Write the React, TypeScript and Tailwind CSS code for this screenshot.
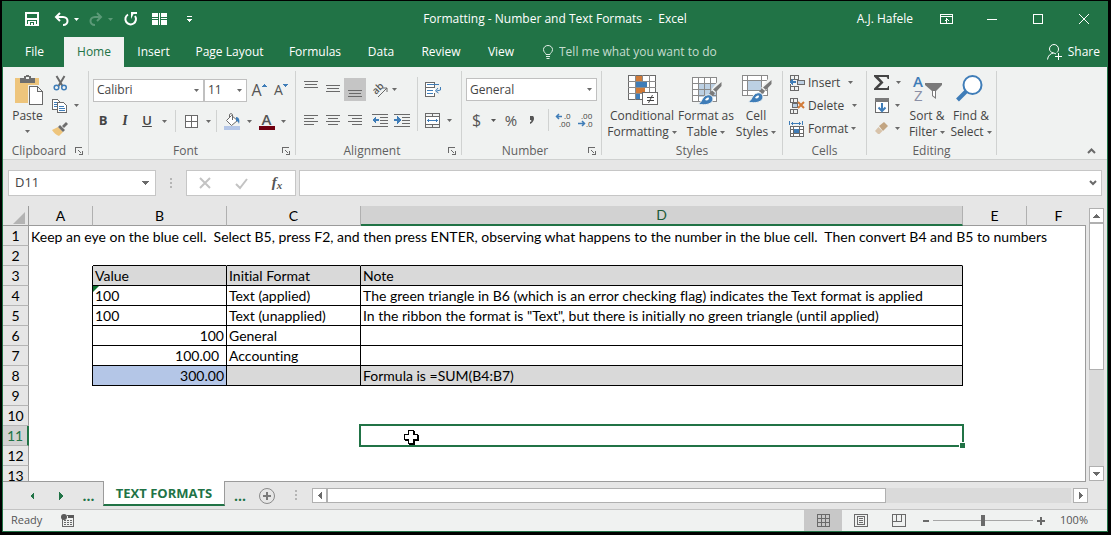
import type { ReactNode } from "react"
import clsx from "clsx"

interface SheetRow {
  value?: string
  format?: string
  note?: string
}

const rows: Record<number, SheetRow> = {
  3: { value: "Value", format: "Initial Format", note: "Note" },
  4: {
    value: "100",
    format: "Text (applied)",
    note: "The green triangle in B6 (which is an error checking flag) indicates the Text format is applied",
  },
  5: {
    value: "100",
    format: "Text (unapplied)",
    note: 'In the ribbon the format is "Text", but there is initially no green triangle (until applied)',
  },
  6: { value: "100", format: "General" },
  7: { value: "100.00", format: "Accounting" },
  8: { value: "300.00", note: "Formula is =SUM(B4:B7)" },
}

const tabs = [
  { name: "File", width: "w-[59px]" },
  { name: "Home", width: "w-[60px]" },
  { name: "Insert", width: "w-[59px]" },
  { name: "Page Layout", width: "w-[93px]" },
  { name: "Formulas", width: "w-[78px]" },
  { name: "Data", width: "w-[54px]" },
  { name: "Review", width: "w-[66px]" },
  { name: "View", width: "w-[54px]" },
]

function Caret({ className }: { className?: string }) {
  return (
    <svg className={clsx("shrink-0", className)} width="5" height="3" viewBox="0 0 5 3" fill="currentColor">
      <path d="M0 0h5L2.5 3z" />
    </svg>
  )
}

function Icon({ w = 16, h = 16, soft, children }: { w?: number; h?: number; soft?: boolean; children: ReactNode }) {
  return (
    <svg
      className="shrink-0 overflow-visible"
      width={w}
      height={h}
      viewBox={`0 0 ${w} ${h}`}
      fill="none"
      stroke="#6a6a6a"
      shapeRendering={soft ? "auto" : "crispEdges"}
    >
      {children}
    </svg>
  )
}

function IconButton({ label, className, children }: { label: string; className?: string; children: ReactNode }) {
  return (
    <button type="button" aria-label={label} className={clsx("flex shrink-0 items-center justify-center", className)}>
      {children}
    </button>
  )
}

function Group({ title, width, launcher, children }: { title: string; width: string; launcher?: boolean; children: ReactNode }) {
  return (
    <>
      <section className={clsx("flex shrink-0 flex-col pt-1", width)}>
        <div className="flex flex-1">{children}</div>
        <div className="flex h-4 items-center text-[#5f5f5f]">
          <span className="flex-1 text-center">{title}</span>
          {launcher && (
            <span className="flex w-[13px]">
              <IconButton label={`${title} settings`}>
                <Icon w={8} h={8}>
                  <path d="M.5 6V.5H7M3 3l3 3M3.500 7.500h4v-4" />
                </Icon>
              </IconButton>
            </span>
          )}
        </div>
      </section>
      <div className="my-1 w-px shrink-0 bg-[#d0d2d1]" />
    </>
  )
}

function Dropdown({ label, value, className }: { label: string; value: string; className: string }) {
  return (
    <label className={clsx("relative block h-[23px]", className)}>
      <select
        aria-label={label}
        defaultValue={value}
        className="h-full w-full appearance-none border border-[#c0c0c0] bg-white pl-[3px] text-[#444]"
      >
        <option>{value}</option>
      </select>
      <Caret className="pointer-events-none absolute top-[10px] right-[5px]" />
    </label>
  )
}

function BigButton({ icon, lines, width }: { icon: ReactNode; lines: [string, string]; width: string }) {
  return (
    <button type="button" className={clsx("flex shrink-0 flex-col items-center pt-1 leading-4 whitespace-nowrap text-[#444]", width)}>
      <span className="mb-[3px] flex h-[30px]">{icon}</span>
      <span>{lines[0]}</span>
      <span className="flex items-center gap-[3px]">
        {lines[1]}
        <Caret className="text-[#6a6a6a]" />
      </span>
    </button>
  )
}

function CellsButton({ icon, text, width }: { icon: ReactNode; text: string; width: string }) {
  return (
    <button type="button" className="flex h-[23px] items-center text-[#444]">
      <span className={clsx("flex items-center gap-[3px]", width)}>
        {icon}
        {text}
      </span>
      <Caret className="text-[#6a6a6a]" />
    </button>
  )
}

function Brush() {
  return (
    <g stroke="none" shapeRendering="auto">
      <path d="M29 6v5l-6 7-4-3 7-9z" fill="#f0f2f1" />
      <path d="M29.500 7v4l-5.500 6-3-2.500zM20 15.500l3 2.500-2 3-4-2.500z" fill="#7a7a7a" />
      <path d="M6 29c4-1 4-8 9-9 3-1 6 1 6 4 0 5-8 7-15 5z" fill="#3f7db8" stroke="#f0f2f1" />
      <path d="M13 25c1-2 3-3 4-2 0 2-2 3-4 2z" fill="#fff" />
    </g>
  )
}

function Lines({ y }: { y: number }) {
  return (
    <Icon w={14} h={23}>
      <path d={`M0 ${y}h14M1 ${y + 3}h12M0 ${y + 6}h14`} />
    </Icon>
  )
}

function TextLines({ indent }: { indent: number }) {
  return (
    <Icon w={14} h={22}>
      <path d={`M0 6.500h14M${indent} 9.500h10M0 12.500h14M${indent} 15.500h10`} />
    </Icon>
  )
}

function TitleBar() {
  return (
    <header className="grid h-9 shrink-0 grid-cols-[1fr_auto_1fr] items-center bg-[#217346] text-white">
      <div className="flex h-full items-center pl-3">
        <IconButton label="Save" className="w-[34px]">
          <Icon w={14} h={14}>
            <path d="M1 1h12v12H1z" stroke="#fff" strokeWidth="2" />
            <path d="M2 6h10v2H2zM3 9h8v4H3z" fill="#fff" stroke="none" />
            <path d="M5 10h4v3H5z" fill="#217346" stroke="none" />
            <path d="M6 11h2v2H6z" fill="#fff" stroke="none" />
          </Icon>
        </IconButton>
        <IconButton label="Undo" className="w-[35px] gap-[5px]">
          <Icon w={15} h={14} soft>
            <path d="M6 1L2 5l4 4M2 5h7c6 0 6 8 0 8" stroke="#fff" strokeWidth="2" />
          </Icon>
          <Caret />
        </IconButton>
        <IconButton label="Redo" className="w-[34px] gap-[5px] text-[#5c9a78]">
          <Icon w={14} h={14} soft>
            <path d="M8 1l4 4-4 4M12 5H6C0 5 0 13 6 13" stroke="#5c9a78" strokeWidth="2" />
          </Icon>
          <Caret />
        </IconButton>
        <IconButton label="Repeat" className="w-[26px]">
          <Icon w={14} h={14} soft>
            <path d="M4 2.500A5.300 5.300 0 1 0 11 4" stroke="#fff" strokeWidth="2" />
            <path d="M7 0h6v2H9.500L7 7z" fill="#fff" stroke="none" />
          </Icon>
        </IconButton>
        <IconButton label="Freeze panes" className="w-[31px]">
          <Icon w={15} h={12}>
            <path d="M0 0h6v4H0zM9 0h6v4H9zM0 5h6v1H0zM9 5h6v1H9zM0 7h6v5H0zM9 7h6v5H9zM7 0h1v12H7z" fill="#fff" stroke="none" />
          </Icon>
        </IconButton>
        <IconButton label="Customize toolbar" className="w-7">
          <Icon w={5} h={6}>
            <path d="M0 .5h5" stroke="#fff" />
            <path d="M0 3h5L2.500 6z" fill="#fff" stroke="none" />
          </Icon>
        </IconButton>
      </div>
      <h1 className="whitespace-pre">Formatting - Number and Text Formats  -  Excel</h1>
      <div className="flex h-full items-center justify-end">
        <span className="mr-[10px]">A.J. Hafele</span>
        <IconButton label="Ribbon display options" className="h-full w-[46px]">
          <Icon w={13} h={10}>
            <path d="M.5.5h12v9H.5zM0 2.500h13M6.500 4v5M4.500 6.500h1M7.500 6.500h1M5.500 5.500h2" stroke="#fff" />
          </Icon>
        </IconButton>
        <IconButton label="Minimize" className="h-full w-[46px]">
          <Icon w={10} h={10}>
            <path d="M0 5.500h10" stroke="#fff" />
          </Icon>
        </IconButton>
        <IconButton label="Maximize" className="h-full w-[46px]">
          <Icon w={10} h={10}>
            <path d="M.5.5h9v9h-9z" stroke="#fff" />
          </Icon>
        </IconButton>
        <IconButton label="Close" className="h-full w-[46px]">
          <Icon w={10} h={10} soft>
            <path d="M0 0l10 10M10 0L0 10" stroke="#fff" />
          </Icon>
        </IconButton>
      </div>
    </header>
  )
}

function TabBar() {
  return (
    <nav className="flex h-[30px] shrink-0 bg-[#217346] pr-[7px] text-white">
      <span className="w-0.5" />
      {tabs.map((tab) => (
        <button
          key={tab.name}
          type="button"
          className={clsx("shrink-0 whitespace-nowrap", tab.width, tab.name === "Home" && "bg-[#f0f2f1] text-[#217346]")}
        >
          {tab.name}
        </button>
      ))}
      <label className="flex flex-1 items-center gap-[6px] pl-[15px]">
        <Icon w={10} h={14} soft>
          <path d="M3 9.500C3 8 .5 7.500.5 4.500a4.500 4 0 0 1 9 0C9.500 7.500 7 8 7 9.500zM3 11.500h4M3.500 13.500h3" stroke="#e3efe8" />
        </Icon>
        <input
          aria-label="Tell me what you want to do"
          placeholder="Tell me what you want to do"
          className="w-full bg-transparent outline-none placeholder:text-[#c5dccf]"
        />
      </label>
      <button type="button" className="flex items-center gap-[6px]">
        <Icon w={15} h={16} soft>
          <path d="M6.500 9C4 8.500 2.500 7 2.500 5a4.500 4.500 0 0 1 9 0c0 1.500-.5 2.500-1.500 3.500M6.500 9C3.500 9.500 1 11.500.5 15.500M6.500 9c1 .2 2 .6 2.500 1M11.500 9v7M8 12.500h7" stroke="#fff" />
        </Icon>
        Share
      </button>
    </nav>
  )
}

function ClipboardGroup() {
  return (
    <Group title="Clipboard" width="w-[85px]" launcher>
      <button type="button" className="flex w-[49px] flex-col items-center pt-1 leading-4 text-[#444]">
        <span className="mb-[3px] flex h-[30px]">
          <Icon w={26} h={30}>
            <path d="M0 3h24v25H0z" fill="#eec57c" stroke="none" />
            <path d="M5 3h4V1h2V0h3v1h2v2h4v5H5z" fill="#6e6e6e" stroke="none" />
            <path d="M11 2h3v2h-3z" fill="#f0f2f1" stroke="none" />
            <path d="M13 10h11l5 5v16H13z" fill="#f0f2f1" stroke="none" />
            <path d="M14.500 11.500h8l5 5v13h-13zM22.500 11.500v5h5" fill="#fff" />
          </Icon>
        </span>
        <span>Paste</span>
        <Caret className="mt-[6px] text-[#6a6a6a]" />
      </button>
      <div className="flex flex-col items-start text-[#6a6a6a]">
        <IconButton label="Cut" className="h-[23px] pl-px">
          <Icon w={15} h={16} soft>
            <path d="M3.500 1l6 10M11.500 1l-6 10" strokeWidth="2" />
            <circle cx="3.500" cy="12.500" r="2.300" stroke="#3f7db8" strokeWidth="1.500" />
            <circle cx="11" cy="12.500" r="2.300" stroke="#3f7db8" strokeWidth="1.500" />
          </Icon>
        </IconButton>
        <IconButton label="Copy" className="h-[23px] gap-[6px]">
          <Icon w={16} h={14}>
            <path d="M.5.5h5l3 3v7h-8z" fill="#fff" />
            <path d="M2 3.500h3M2 5.500h3M2 7.500h3" stroke="#3f7db8" />
            <path d="M5.500 3.500h6l3 3v7h-9z" fill="#fff" />
            <path d="M7 7.500h5M7 9.500h6M7 11.500h6" stroke="#3f7db8" />
          </Icon>
          <Caret />
        </IconButton>
        <IconButton label="Format painter" className="h-[23px]">
          <Icon w={17} h={15} soft>
            <path d="M0 9l6-3 5 5-4 4c-3-1-5-3-7-6z" fill="#eec57c" stroke="none" />
            <path d="M6 6l2-2 5 5-2 2zM10 5l4-4 2 2-4 4z" fill="#6e6e6e" stroke="none" />
          </Icon>
        </IconButton>
      </div>
    </Group>
  )
}

function FontGroup() {
  return (
    <Group title="Font" width="w-[206px]" launcher>
      <div className="flex flex-col gap-2 pt-[7px] pl-1 text-[#6a6a6a]">
        <div className="flex items-center">
          <Dropdown label="Font" value="Calibri" className="w-[111px]" />
          <Dropdown label="Font size" value="11" className="w-[43px]" />
          <IconButton label="Increase font size" className="w-6 text-base text-[#555]">
            A
            <Icon w={5} h={16}>
              <path d="M0 5h5L2.500 2z" fill="#3f7db8" stroke="none" />
            </Icon>
          </IconButton>
          <IconButton label="Decrease font size" className="w-5 text-sm text-[#555]">
            A
            <Icon w={5} h={16}>
              <path d="M0 2h5L2.500 5z" fill="#3f7db8" stroke="none" />
            </Icon>
          </IconButton>
        </div>
        <div className="flex h-[22px] items-center">
          <IconButton label="Bold" className="w-5 text-[13px] font-bold text-[#444]">
            B
          </IconButton>
          <IconButton label="Italic" className="w-6 font-serif text-sm font-bold text-[#444] italic">
            I
          </IconButton>
          <IconButton label="Underline" className="w-5 text-[13px] font-semibold text-[#444] underline">
            U
          </IconButton>
          <IconButton label="Underline style" className="w-[14px]">
            <Caret />
          </IconButton>
          <span className="mx-1 h-[22px] w-px bg-[#d0d2d1]" />
          <IconButton label="Borders" className="w-9 gap-2">
            <Icon w={13} h={13}>
              <path d="M.5.5h12v12H.5zM6.500 0v13M0 6.500h13" fill="#fff" />
            </Icon>
            <Caret />
          </IconButton>
          <span className="mr-1 h-[22px] w-px bg-[#d0d2d1]" />
          <IconButton label="Fill color" className="w-[34px] gap-[6px]">
            <Icon w={17} h={17} soft>
              <path d="M2.500 7.500l5-5 6 5-6 5zM5.500 5V1.500c0-1 3-1 3 0V7" fill="#fff" />
              <path d="M12 4c3 0 4 3 3 7-1-3-2-3-3-3z" fill="#3f7db8" stroke="none" />
              <path d="M0 13h16v4H0z" fill="#b4c6e7" stroke="none" />
            </Icon>
            <Caret />
          </IconButton>
          <IconButton label="Font color" className="w-[34px] gap-[6px]">
            <span className="flex w-4 flex-col items-center border-b-4 border-[#700010] text-[15px] leading-[13px] font-semibold text-[#555]">A</span>
            <Caret />
          </IconButton>
        </div>
      </div>
    </Group>
  )
}

function AlignmentGroup() {
  return (
    <Group title="Alignment" width="w-[165px]" launcher>
      <div className="flex flex-col gap-2 pt-[7px] pl-1 text-[#6a6a6a]">
        <div className="flex h-[23px]">
          <IconButton label="Top align" className="w-[22px]">
            <Lines y={3.5} />
          </IconButton>
          <IconButton label="Middle align" className="w-[22px]">
            <Lines y={7.5} />
          </IconButton>
          <IconButton label="Bottom align" className="mr-[6px] w-[22px] bg-[#c5c5c5]">
            <Lines y={12.5} />
          </IconButton>
          <IconButton label="Orientation" className="gap-1">
            <Icon w={16} h={16} soft>
              <path d="M6 15l9-9M15 6h-4M15 6v4" />
              <text transform="translate(4 13) rotate(-45)" fontSize="10" fontWeight="600" fill="#555" stroke="none">
                ab
              </text>
            </Icon>
            <Caret />
          </IconButton>
        </div>
        <div className="flex h-[22px]">
          <IconButton label="Align left" className="w-[22px]">
            <TextLines indent={0} />
          </IconButton>
          <IconButton label="Center" className="w-[22px]">
            <TextLines indent={2} />
          </IconButton>
          <IconButton label="Align right" className="mr-[3px] w-[22px]">
            <TextLines indent={4} />
          </IconButton>
          <IconButton label="Decrease indent" className="w-[22px]">
            <Icon w={16} h={13}>
              <path d="M0 .5h16M8 3.500h8M8 6.500h8M8 9.500h8M0 12.500h16" />
              <path d="M0 6l4-4v3h3v2H4v3z" fill="#3f7db8" stroke="none" />
            </Icon>
          </IconButton>
          <IconButton label="Increase indent" className="w-[22px]">
            <Icon w={16} h={13}>
              <path d="M0 .5h16M8 3.500h8M8 6.500h8M8 9.500h8M0 12.500h16" />
              <path d="M7 6L3 2v3H0v2h3v3z" fill="#3f7db8" stroke="none" />
            </Icon>
          </IconButton>
        </div>
      </div>
      <span className="mt-[6px] ml-1 h-[54px] w-px bg-[#d0d2d1]" />
      <div className="flex flex-col gap-2 pt-[7px] pl-[7px] text-[#6a6a6a]">
        <IconButton label="Wrap text" className="h-[23px] w-4">
          <Icon w={16} h={15}>
            <path d="M9.500 5V.5h-9v14h9V11" fill="#fff" />
            <path d="M0 5.500h10" />
            <path d="M2 2.500h12M2 8.500h6M2 11.500h6" stroke="#3f7db8" />
            <path d="M15.500 5v3l-4 1M13 6l-2.500 3 3 2" stroke="#3f7db8" shapeRendering="auto" />
          </Icon>
        </IconButton>
        <IconButton label="Merge and center" className="h-[22px] gap-[7px]">
          <Icon w={15} h={15}>
            <path d="M.5.5h14v14H.5zM0 3.500h15M0 11.500h15M7.500 0v3M7.500 12v3" />
            <path d="M1 4h13v7H1z" fill="#fff" stroke="none" />
            <path d="M2 7.500h11M3.500 6v3M11.500 6v3" stroke="#3f7db8" />
          </Icon>
          <Caret />
        </IconButton>
      </div>
    </Group>
  )
}

function NumberGroup() {
  return (
    <Group title="Number" width="w-[139px]" launcher>
      <div className="flex flex-col gap-2 pt-[7px] pl-1 text-[#6a6a6a]">
        <Dropdown label="Number format" value="General" className="w-[131px]" />
        <div className="flex h-[22px] items-center">
          <IconButton label="Accounting format" className="w-9 gap-[10px] text-base text-[#555]">
            $<Caret />
          </IconButton>
          <IconButton label="Percent style" className="w-[18px] text-[15px] text-[#555]">
            %
          </IconButton>
          <IconButton label="Comma style" className="w-6">
            <Icon w={6} h={8} soft>
              <path d="M1 0h3c2 2 1 6-3 8V6c1 0 2-1 1-2H1z" fill="#555" stroke="none" />
            </Icon>
          </IconButton>
          <span className="mx-1 h-[22px] w-px bg-[#d0d2d1]" />
          <IconButton label="Increase decimal" className="w-[22px]">
            <Icon w={16} h={14} soft>
              <path d="M0 3.500h6M3 1L.5 3.500 3 6" stroke="#3f7db8" strokeWidth="1.500" />
              <text x="8" y="6" fontSize="8" fill="#444" stroke="none">.0</text>
              <text x="3" y="14" fontSize="8" fill="#444" stroke="none">.00</text>
            </Icon>
          </IconButton>
          <IconButton label="Decrease decimal" className="w-[22px]">
            <Icon w={16} h={14} soft>
              <text x="3" y="6" fontSize="8" fill="#444" stroke="none">.00</text>
              <path d="M0 10.500h6M4 8l2.500 2.500L4 13" stroke="#3f7db8" strokeWidth="1.500" />
              <text x="8" y="14" fontSize="8" fill="#444" stroke="none">.0</text>
            </Icon>
          </IconButton>
        </div>
      </div>
    </Group>
  )
}

function StylesGroup() {
  return (
    <Group title="Styles" width="w-[180px]">
      <div className="flex pl-2">
        <BigButton
          width="w-16"
          lines={["Conditional", "Formatting"]}
          icon={
            <Icon w={28} h={30}>
              <path d="M.5.5h27v24H.5z" fill="#fff" />
              <path d="M0 6.500h28M0 12.500h28M0 18.500h28M7.500 0v25M14.500 0v25M21.500 0v25" stroke="#8a8a8a" />
              <path d="M8 1h6v5H8zM8 13h9v5H8z" fill="#d27b38" stroke="none" />
              <path d="M8 7h11v5H8zM8 19h4v5H8z" fill="#3f7db8" stroke="none" />
              <path d="M14.500 17.500h15v12h-15z" fill="#fff" />
              <path d="M19 22.500h7M19 25.500h7M24.500 20l-4 8" stroke="#444" shapeRendering="auto" />
            </Icon>
          }
        />
        <BigButton
          width="w-16"
          lines={["Format as", "Table"]}
          icon={
            <Icon w={28} h={30}>
              <path d="M.5 2.500h24v24H.5z" fill="#fff" />
              <path d="M7 9h18v13H7z" fill="#bcd0e3" stroke="none" />
              <path d="M.5 2.500h24v24H.5zM0 8.500h25M0 14.500h25M0 20.500h25M6.500 2v25M12.500 2v25M18.500 2v25" stroke="#8a8a8a" />
              <Brush />
            </Icon>
          }
        />
        <BigButton
          width="w-9"
          lines={["Cell", "Styles"]}
          icon={
            <Icon w={28} h={30}>
              <path d="M.5.5h25v20H.5z" fill="#fff" />
              <path d="M6 6h13v9H6z" fill="#bcd0e3" stroke="none" />
              <path d="M.5.5h25v20H.5zM0 5.500h26M0 15.500h26M5.500 0v21M19.500 0v21" stroke="#8a8a8a" />
              <g transform="translate(0 -2)">
                <Brush />
              </g>
            </Icon>
          }
        />
      </div>
    </Group>
  )
}

function CellsGroup() {
  return (
    <Group title="Cells" width="w-[83px]">
      <div className="flex flex-col items-start pl-[6px]">
        <CellsButton
          text="Insert"
          width="w-[59px]"
          icon={
            <Icon w={16} h={16}>
              <path d="M1.500.5h8v4h-8zM5.500 0v4M1.500 11.500h8v4h-8zM5.500 11v5M1.500 4v2M1.500 9v2" />
              <path d="M8.500 5.500h7v4h-7z" fill="#bcd0e3" />
              <path d="M0 7l4-3v2h3v2H4v2z" fill="#3f7db8" stroke="none" />
            </Icon>
          }
        />
        <CellsButton
          text="Delete"
          width="w-[63px]"
          icon={
            <Icon w={16} h={16}>
              <path d="M1.500.5h7v4h-7zM4.500 0v4M1.500 11.500h7v4h-7zM4.500 11v5" />
              <path d="M3.500 5.500h5v4h-5z" fill="#bcd0e3" />
              <path d="M9 4l6 6M15 4l-6 6" stroke="#d27b38" strokeWidth="2" shapeRendering="auto" />
            </Icon>
          }
        />
        <CellsButton
          text="Format"
          width="w-[62px]"
          icon={
            <Icon w={16} h={16}>
              <path d="M.5 0v4M13.500 0v4M2 2.500h10M3.500 1v3M10.500 1v3" stroke="#3f7db8" />
              <path d="M1.500 5.500h13v10h-13z" fill="#fff" />
              <path d="M1 8.500h14M1 12.500h14M4.500 5v11M10.500 5v11" />
              <path d="M5 8h5v4H5z" fill="#3f7db8" stroke="none" />
            </Icon>
          }
        />
      </div>
    </Group>
  )
}

function EditingGroup() {
  return (
    <Group title="Editing" width="w-[129px]">
      <div className="flex w-9 flex-col items-start pl-[7px] text-[#6a6a6a]">
        <IconButton label="AutoSum" className="h-[23px] gap-[7px]">
          <Icon w={15} h={15} soft>
            <path d="M0 0h15v4h-1.500c0-1.500-.5-2-2-2H4.500L9.500 7.500 4 13h8c1.500 0 2-.5 2-2h1v4H0v-1.500l6-6-6-6z" fill="#444" stroke="none" />
          </Icon>
          <Caret />
        </IconButton>
        <IconButton label="Fill" className="h-[23px] gap-[6px]">
          <Icon w={15} h={15}>
            <path d="M1.500.5h13v14h-13z" fill="#fff" />
            <path d="M1 0h14v4H1z" fill="#7a7a7a" stroke="none" />
            <path d="M8 5v8M4.500 9.500L8 13l3.500-3.500" stroke="#3f7db8" strokeWidth="2" shapeRendering="auto" />
          </Icon>
          <Caret />
        </IconButton>
        <IconButton label="Clear" className="h-[23px] gap-[6px]">
          <Icon w={15} h={13} soft>
            <path d="M5 4l5-4 4 4-5 5z" fill="#c2a582" stroke="none" />
            <path d="M4.500 5l4 4-3 3H4L1 9z" fill="#d8c3aa" stroke="none" />
          </Icon>
          <Caret />
        </IconButton>
      </div>
      <BigButton
        width="w-12"
        lines={["Sort &", "Filter"]}
        icon={
          <Icon w={29} h={30} soft>
            <text x="0" y="12" fontSize="15" fontWeight="600" fill="#3f7db8" stroke="none">A</text>
            <text x="1" y="26" fontSize="15" fill="#8a8fa5" stroke="none">Z</text>
            <path d="M12 8h17v2l-6 6v8l-4-3v-5l-7-6z" fill="#7a7a7a" stroke="none" />
            <path d="M20 16h2v6l-2-1.500z" fill="#fff" stroke="none" />
          </Icon>
        }
      />
      <BigButton
        width="w-10"
        lines={["Find &", "Select"]}
        icon={
          <Icon w={30} h={30} soft>
            <path d="M10.500 16L1.500 25" stroke="#3f7db8" strokeWidth="4" />
            <circle cx="16.500" cy="10" r="9" fill="#fff" stroke="#3f7db8" strokeWidth="2" />
          </Icon>
        }
      />
    </Group>
  )
}

function Ribbon() {
  return (
    <div className="flex h-[93px] shrink-0 border-b border-[#cfd1d0] bg-[#f0f2f1]">
      <ClipboardGroup />
      <FontGroup />
      <AlignmentGroup />
      <NumberGroup />
      <StylesGroup />
      <CellsGroup />
      <EditingGroup />
      <div className="flex flex-1 items-end justify-end pr-[11px] pb-[5px]">
        <IconButton label="Collapse the ribbon">
          <Icon w={9} h={6} soft>
            <path d="M1 5l3.500-3.500L8 5" strokeWidth="2" />
          </Icon>
        </IconButton>
      </div>
    </div>
  )
}

function Dots() {
  return (
    <Icon w={2} h={11}>
      <path d="M0 0h2v2H0zM0 4h2v2H0zM0 8h2v2H0z" fill="#b5b5b5" stroke="none" />
    </Icon>
  )
}

function FormulaBar() {
  return (
    <div className="flex shrink-0 items-center px-[5px] py-[10px]">
      <div className="flex h-[26px] w-[148px] shrink-0 items-center border border-[#c6c6c6] bg-white px-[6px] text-[#6a6a6a]">
        <input aria-label="Name box" defaultValue="D11" className="w-full min-w-0 text-[13px] text-[#444] outline-none" />
        <IconButton label="Show names">
          <Icon w={7} h={4}>
            <path d="M0 0h7L3.500 4z" fill="#6a6a6a" stroke="none" />
          </Icon>
        </IconButton>
      </div>
      <span className="flex w-[30px] shrink-0 justify-center">
        <Dots />
      </span>
      <div className="mr-[3px] flex h-[26px] w-[110px] shrink-0 items-center border border-[#c6c6c6] bg-white">
        <IconButton label="Cancel" className="w-9">
          <Icon w={12} h={12} soft>
            <path d="M1 1l10 10M11 1L1 11" stroke="#c3c3c3" strokeWidth="2" />
          </Icon>
        </IconButton>
        <IconButton label="Enter" className="w-9">
          <Icon w={13} h={11} soft>
            <path d="M1 6l4 4 7-9" stroke="#c3c3c3" strokeWidth="2" />
          </Icon>
        </IconButton>
        <IconButton label="Insert function" className="w-9 font-['Liberation_Serif',serif] text-[15px] font-bold text-[#555] italic">
          f<span className="pt-1 text-[11px]">x</span>
        </IconButton>
      </div>
      <div className="flex h-[26px] flex-1 items-center border border-[#c6c6c6] bg-white pr-1">
        <input aria-label="Formula" className="w-full min-w-0 pl-1 outline-none" />
        <IconButton label="Expand formula bar">
          <Icon w={8} h={6} soft>
            <path d="M1 1l3 3 3-3" strokeWidth="2" />
          </Icon>
        </IconButton>
      </div>
    </div>
  )
}

function Selection() {
  return (
    <div className="absolute -inset-0.5 border-2 border-[#217346]">
      <span className="absolute -right-[3px] -bottom-[3px] h-[6px] w-[6px] border-t border-l border-white bg-[#217346]" />
      <svg className="absolute top-1 left-[43px]" width="15" height="15" viewBox="0 0 15 15" shapeRendering="crispEdges">
        <path d="M5 1h6v4h4v6h-4v4H5v-4H1V5h4z" fill="#000" />
        <path d="M4 0h6v4h4v6h-4v4H4v-4H0V4h4z" fill="#000" />
        <path d="M5 1h4v4h4v4H9v4H5V9H1V5h4z" fill="#fff" />
      </svg>
    </div>
  )
}

function Sheet() {
  return (
    <div className="flex min-h-0 flex-1">
      <div className="min-w-0 flex-1 overflow-hidden bg-white">
        <table className="w-full table-fixed border-separate border-spacing-0 font-[Lato,sans-serif] text-sm leading-[19px] whitespace-nowrap text-black [font-variant-ligatures:none]">
          <colgroup>
            <col className="w-[26px]" />
            <col className="w-16" />
            <col className="w-[134px]" />
            <col className="w-[134px]" />
            <col className="w-[602px]" />
            <col className="w-16" />
            <col />
          </colgroup>
          <thead>
            <tr className="h-5 bg-[#e6e6e6]">
              <td className="border-r border-b border-[#9b9b9b] p-0">
                <svg className="mt-1 ml-[10px]" width="12" height="12" viewBox="0 0 12 12">
                  <path d="M12 0v12H0z" fill="#b3b3b3" />
                </svg>
              </td>
              {["A", "B", "C", "D", "E", "F"].map((col) => (
                <th
                  key={col}
                  scope="col"
                  className={clsx(
                    "p-0 text-center font-normal",
                    col === "F" ? "border-b border-[#9b9b9b] pl-1" : "border-r border-r-[#b0b0b0]",
                    col === "D" ? "border-b-2 border-b-[#217346] bg-[#d2d2d2] leading-[18px] text-[#1d5a38]" : "border-b border-b-[#9b9b9b]",
                  )}
                >
                  {col}
                </th>
              ))}
            </tr>
          </thead>
          <tbody>
            {Array.from({ length: 13 }, (_, i) => i + 1).map((n) => {
              const row = rows[n]
              const boxed = n >= 3 && n <= 8
              const edge = boxed
                ? "border-r border-b border-black"
                : n === 2
                  ? "border-r border-b border-r-transparent border-b-black"
                  : "border-r border-b border-transparent"
              const shade = (n === 3 || n === 8) && "bg-[#d9d9d9]"
              return (
                <tr key={n} className="h-5">
                  <th
                    scope="row"
                    className={clsx(
                      "border-b border-b-[#b5b5b5] p-0 text-center font-normal",
                      n === 11 ? "border-r-2 border-r-[#217346] bg-[#d2d2d2] text-[#217346]" : "border-r border-r-[#9b9b9b] bg-[#e6e6e6]",
                    )}
                  >
                    {n}
                  </th>
                  <td className={clsx("border-r p-0 pl-0.5", boxed ? "border-black" : "border-transparent")}>
                    {n === 1 &&
                      "Keep an eye on the blue cell.\u00a0 Select B5, press F2, and then press ENTER, observing what happens to the number in the blue cell.\u00a0 Then convert B4 and B5 to numbers"}
                  </td>
                  <td
                    className={clsx(
                      "relative p-0 pl-0.5",
                      edge,
                      n === 8 ? "bg-[#b4c6e7]" : shade,
                      n >= 6 && "text-right",
                      n === 7 ? "pr-[7px]" : "pr-0.5",
                    )}
                  >
                    {row?.value}
                    {n === 4 && (
                      <svg className="absolute top-0 left-0" width="6" height="6" viewBox="0 0 6 6">
                        <path d="M0 0h6L0 6z" fill="#0f7030" />
                      </svg>
                    )}
                  </td>
                  <td className={clsx("p-0 pl-0.5", edge, shade)}>{row?.format}</td>
                  <td className={clsx("relative p-0 pl-0.5", edge, shade)}>
                    {row?.note}
                    {n === 11 && <Selection />}
                  </td>
                  <td className="p-0" />
                  <td className="border-r border-[#9b9b9b] p-0" />
                </tr>
              )
            })}
          </tbody>
        </table>
      </div>
      <div className="flex w-[21px] shrink-0 flex-col px-[3px] pt-0.5">
        <IconButton label="Scroll up" className="h-[15px] border border-[#b0b0b0] bg-white">
          <Icon w={7} h={4}>
            <path d="M0 4h7L3.500 0z" fill="#6a6a6a" stroke="none" />
          </Icon>
        </IconButton>
        <div className="flex flex-1 flex-col bg-[#dadada]">
          <div className="flex-[3] border border-[#b0b0b0] bg-white" />
          <div className="flex-[2]" />
        </div>
        <IconButton label="Scroll down" className="h-[15px] border border-[#b0b0b0] bg-white">
          <Icon w={7} h={4}>
            <path d="M0 0h7L3.500 4z" fill="#6a6a6a" stroke="none" />
          </Icon>
        </IconButton>
      </div>
    </div>
  )
}

function SheetTabs() {
  return (
    <div className="flex h-7 shrink-0">
      <div className="flex w-[100px] shrink-0 items-center border-t border-[#9b9b9b] pl-[14px]">
        <IconButton label="Previous sheet" className="w-[29px]">
          <Icon w={4} h={8}>
            <path d="M4 0v8L0 4z" fill="#217346" stroke="none" />
          </Icon>
        </IconButton>
        <IconButton label="Next sheet" className="w-[29px]">
          <Icon w={4} h={8}>
            <path d="M0 0v8l4-4z" fill="#217346" stroke="none" />
          </Icon>
        </IconButton>
        <button type="button" className="w-[27px] text-sm font-bold text-[#217346]">
          ...
        </button>
      </div>
      <button
        type="button"
        className="flex h-[25px] w-[122px] shrink-0 items-center justify-center border-x border-b-2 border-x-[#9b9b9b] border-b-[#217346] bg-white pt-0.5 text-[13px] font-bold whitespace-nowrap text-[#217346]"
      >
        TEXT FORMATS
      </button>
      <div className="flex min-w-0 flex-1 flex-col">
        <div className="mr-[21px] h-px bg-[#9b9b9b]" />
        <div className="flex flex-1 items-center pr-[19px]">
          <button type="button" className="w-[30px] text-sm font-bold text-[#217346]">
            ...
          </button>
          <IconButton label="New sheet" className="w-6">
            <Icon w={16} h={16} soft>
              <circle cx="8" cy="8" r="7.500" stroke="#8a8a8a" />
              <path d="M4 8h8M8 4v8" stroke="#7a7a7a" strokeWidth="2" />
            </Icon>
          </IconButton>
          <span className="flex w-[33px] shrink-0 justify-center">
            <Dots />
          </span>
          <IconButton label="Scroll left" className="h-[15px] w-[15px] border border-[#b0b0b0] bg-white">
            <Icon w={4} h={7}>
              <path d="M4 0v7L0 3.500z" fill="#6a6a6a" stroke="none" />
            </Icon>
          </IconButton>
          <div className="mr-0.5 flex h-[15px] flex-1 bg-[#dadada]">
            <div className="flex-[3] border border-[#b0b0b0] bg-white" />
            <div className="flex-1" />
          </div>
          <IconButton label="Scroll right" className="h-[15px] w-[15px] border border-[#b0b0b0] bg-white">
            <Icon w={4} h={7}>
              <path d="M0 0v7l4-3.500z" fill="#6a6a6a" stroke="none" />
            </Icon>
          </IconButton>
        </div>
      </div>
    </div>
  )
}

function StatusBar() {
  return (
    <footer className="flex h-[22px] shrink-0 items-center border-t border-[#c3c3c3] bg-[#f0f2f1] pl-2 text-[11px] text-[#555]">
      <span className="w-[50px]">Ready</span>
      <IconButton label="Record macro">
        <Icon w={14} h={13}>
          <path d="M1.500 5v7.500h11v-11H6" />
          <path d="M7 1h6v3H7z" fill="#5a5a5a" stroke="none" />
          <path d="M3 6.500h2M6 6.500h2M9 6.500h2M3 8.500h2M6 8.500h2M9 8.500h2M3 10.500h2M6 10.500h2M9 10.500h2" />
          <circle cx="3" cy="3" r="3" fill="#5a5a5a" stroke="none" shapeRendering="auto" />
        </Icon>
      </IconButton>
      <div className="flex h-full flex-1 items-center justify-end">
        <IconButton label="Normal view" className="h-full w-[38px] bg-[#c8c8c8]">
          <Icon w={13} h={13}>
            <path d="M.5.5h12v12H.5zM0 4.500h13M0 8.500h13M4.500 0v13M8.500 0v13" />
          </Icon>
        </IconButton>
        <IconButton label="Page layout view" className="h-full w-[38px]">
          <Icon w={14} h={13}>
            <path d="M.5.5h13v12H.5zM3.500 2.500h7v8h-7zM5 4.500h4M5 6.500h4M5 8.500h4" />
          </Icon>
        </IconButton>
        <IconButton label="Page break preview" className="h-full w-[38px]">
          <Icon w={14} h={13}>
            <path d="M.5.5h13v12H.5zM4.500 0v7.500M9.500 0v7.500M0 7.500h10" />
          </Icon>
        </IconButton>
        <IconButton label="Zoom out" className="w-[15px]">
          <Icon w={6} h={2}>
            <path d="M0 1h6" strokeWidth="2" />
          </Icon>
        </IconButton>
        <input
          type="range"
          aria-label="Zoom"
          min={0}
          max={100}
          defaultValue={50}
          className="h-[11px] w-[100px] appearance-none bg-transparent [&::-webkit-slider-runnable-track]:h-px [&::-webkit-slider-runnable-track]:bg-[#a6a6a6] [&::-webkit-slider-thumb]:-mt-[5px] [&::-webkit-slider-thumb]:h-[11px] [&::-webkit-slider-thumb]:w-1 [&::-webkit-slider-thumb]:appearance-none [&::-webkit-slider-thumb]:bg-[#6a6a6a]"
        />
        <IconButton label="Zoom in" className="w-4">
          <Icon w={8} h={8}>
            <path d="M0 4h8M4 0v8" strokeWidth="2" />
          </Icon>
        </IconButton>
        <span className="w-[58px] pr-[19px] text-right">100%</span>
      </div>
    </footer>
  )
}

export default function App() {
  return (
    <div className="flex h-screen flex-col bg-black pt-px pr-[3px] pb-[3px] pl-0.5 font-['Open_Sans',sans-serif] text-xs">
      <main className="flex min-h-0 flex-1 flex-col overflow-hidden border-x border-b border-[#217346] bg-[#e6e6e6]">
        <TitleBar />
        <TabBar />
        <Ribbon />
        <FormulaBar />
        <Sheet />
        <SheetTabs />
        <StatusBar />
      </main>
    </div>
  )
}
